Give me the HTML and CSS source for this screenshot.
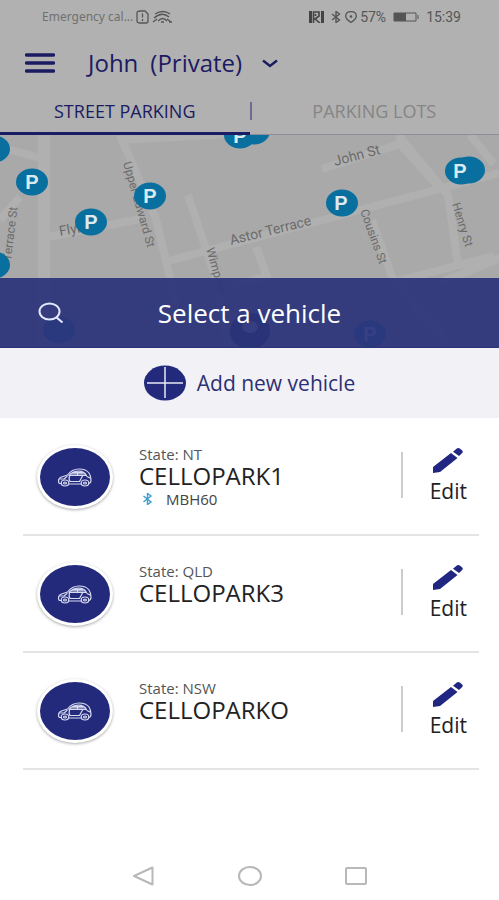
FILE: index.html
```html
<!DOCTYPE html>
<html lang="en">
<head>
<meta charset="utf-8">
<meta name="viewport" content="width=device-width, initial-scale=1">
<title>Select a vehicle</title>
<link rel="stylesheet" href="styles.css">
</head>
<body>
<svg class="defs" aria-hidden="true">
  <symbol id="car" viewBox="0 0 36 20">
    <g fill="none" stroke="currentColor" stroke-width="1.2" stroke-linejoin="round" stroke-linecap="round">
      <path d="M4.500 16.500H3q-1.500 0-1.500-2.500 0-3 3-4l6-2Q15 2 22 2q7 0 10 4 2 3 2 7 0 3-2 3.500M12 17h12"/>
      <path d="M12 8.500Q16 4.200 22 4.200q5 0 7.500 4.300zM20.500 4.500v4M12.500 9q-1 4 .5 5.500h9.500l3-5.500"/>
      <path d="M14 7h14M16 5.700h10"/>
      <ellipse cx="8" cy="16" rx="3.800" ry="3"/><ellipse cx="28" cy="16" rx="3.800" ry="3"/>
      <ellipse cx="8" cy="16" rx="1.500" ry="1"/><ellipse cx="28" cy="16" rx="1.500" ry="1"/>
      <path d="M3 12h4l3-2.500M30 9.500l3 1.500"/>
    </g>
  </symbol>
  <symbol id="pencil" viewBox="0 0 30 26">
    <path fill="currentColor" d="M0 20 18 6l6.500 5L7 25 0 26zM20 4.700l3.800-3.200q1.500-1 3 0l2.400 2q1.200 1.300 0 2.500l-3.200 3z"/>
  </symbol>
  <symbol id="bluetooth" viewBox="0 0 10 12">
    <path fill="none" stroke="currentColor" stroke-width="1.400" d="M1 3l7.500 6L5 11.500V.5L8.500 3 1 9"/>
  </symbol>
</svg>
<main class="screen">
  <div class="status">
    <span class="carrier">Emergency cal...</span>
    <svg class="status-icons" viewBox="0 0 38 14" aria-hidden="true">
      <g fill="none" stroke="currentColor" stroke-width="1.300">
        <path d="M4 1h5l3 3v7q0 2-2 2H4q-3 0-3-2V3q0-2 3-2zM6.500 3.500v4M6.500 9v2"/>
        <path d="M19 4q8-5 15 0M18 8q8-7 15-1M17 12l4-3M22 11q5-5 9 0M25 12h3M31 9l4 3M33 12h3"/>
      </g>
    </svg>
    <span class="spacer"></span>
    <svg class="nfc" viewBox="0 0 15 12" aria-hidden="true"><path fill="currentColor" d="M0 0h3v12H0zM12 0h3v12h-3z"/><path d="M4.500 12V1h5.500v4L6 8l5 4M6.500 3v2" fill="none" stroke="currentColor" stroke-width="1.600"/></svg>
    <svg class="bt" aria-hidden="true"><use href="#bluetooth"/></svg>
    <svg class="loc" viewBox="0 0 12 12" aria-hidden="true"><path d="M6 11.500Q.7 8 .7 5.300.7.700 6 .700t5.300 4.600Q11.300 8 6 11.500z" fill="none" stroke="currentColor" stroke-width="1.300"/><circle cx="6" cy="5.500" r="1.300" fill="currentColor"/></svg>
    <span>57%</span>
    <svg class="battery" viewBox="0 0 26 10" aria-hidden="true"><path d="M1 1h22v8H1zM25 3v4" fill="none" stroke="currentColor"/><path d="M1 1h12v8H1z" fill="currentColor"/></svg>
    <span>15:39</span>
  </div>

  <header class="account">
    <button class="icon-button" type="button" aria-label="Menu">
      <svg class="burger" viewBox="0 0 30 20"><path d="M1.500 2h27M1.500 10h27M1.500 18h27" stroke="currentColor" stroke-width="3.500" stroke-linecap="round"/></svg>
    </button>
    <button class="profile" type="button"><span>John</span><span>(Private)</span>
      <svg class="chevron" viewBox="0 0 16 9"><path d="M1 1.500 8 7l7-5.500" fill="none" stroke="currentColor" stroke-width="2.400"/></svg>
    </button>
  </header>

  <nav class="tabs">
    <a class="tab active" href="#street">STREET PARKING</a>
    <a class="tab" href="#lots">PARKING LOTS</a>
  </nav>

  <section class="map-area" id="street">
    <svg class="map" viewBox="0 0 499 213" preserveAspectRatio="xMidYMid slice">
      <g class="roads">
        <path class="wide" d="M44 0V213"/>
        <path d="M0 12 48 25M0 85l20-23M120 0l36 84 20 85M118 5 250-2M48 102l92-18M168 126 330 83 499 38M188 60l28 84 12 69M322 34 400 9l38 42M398 0l50 60 10 70M470 0l24 29M256 112l11 30-35 8M372 85l22 62 100-26M394 148l55 60M440 148l60-25"/>
      </g>
      <g class="streets">
        <text class="steep" transform="translate(123 28) rotate(74)">Upper Edward St</text>
        <text class="steep" transform="translate(11 126) rotate(-83)">Terrace St</text>
        <text transform="translate(60 101) rotate(-10)">Flynn</text>
        <text transform="translate(231 110) rotate(-14)">Astor Terrace</text>
        <text transform="translate(335 31) rotate(-15)">John St</text>
        <text class="steep" transform="translate(360 76) rotate(70)">Cousins St</text>
        <text class="steep" transform="translate(452 69) rotate(73)">Henry St</text>
        <text class="steep" transform="translate(206 114) rotate(74)">Wimpole</text>
      </g>
      <g class="pins">
        <ellipse cx="-6" cy="14" rx="16" ry="13.500"/><ellipse cx="-6" cy="130" rx="16" ry="13.500"/>
        <ellipse cx="254" cy="-4" rx="16" ry="13.500"/><ellipse cx="240" cy="0" rx="16" ry="13.500"/>
        <ellipse cx="469" cy="35" rx="16" ry="13.500"/><ellipse cx="461" cy="36" rx="16" ry="13.500"/>
        <ellipse cx="32" cy="47" rx="16" ry="13.500"/><ellipse cx="91" cy="87" rx="16" ry="13.500"/>
        <ellipse cx="150" cy="61" rx="16" ry="13.500"/><ellipse cx="342" cy="68" rx="16" ry="13.500"/>
        <ellipse cx="59" cy="195" rx="16" ry="13.500"/><ellipse cx="370" cy="199" rx="16" ry="13.500"/>
        <ellipse class="here" cx="250" cy="196" rx="20" ry="18"/>
      </g>
      <g class="letters">
        <text x="32" y="54">P</text><text x="91" y="94">P</text><text x="150" y="68">P</text>
        <text x="341" y="75">P</text><text x="460" y="43">P</text><text x="240" y="8">P</text><text x="370" y="206">P</text>
      </g>
      <ellipse class="here-dot" cx="250" cy="192" rx="8" ry="6"/>
    </svg>
    <div class="sheet-title">
      <button class="search" type="button" aria-label="Search">
        <svg class="search-icon" viewBox="0 0 26 22"><ellipse cx="11.500" cy="9.500" rx="10" ry="8" fill="none" stroke="currentColor" stroke-width="2"/><path d="m18 15 6.500 5.500" stroke="currentColor" stroke-width="2.200"/></svg>
      </button>
      <h1>Select a vehicle</h1>
      <span></span>
    </div>
  </section>

  <button class="add" type="button">
    <svg class="plus" viewBox="0 0 42 36"><ellipse cx="21" cy="18" rx="21" ry="17.500" fill="#232a7c"/><path d="M3 18h36M21 2v31" stroke="#e9eaf5" stroke-width="1.500"/></svg>
    <span>Add new vehicle</span>
  </button>

  <ul class="vehicles">
    <li class="vehicle">
      <span class="avatar"><svg class="car"><use href="#car"/></svg></span>
      <div class="info"><p class="state">State: NT</p><h2>CELLOPARK1</h2><p class="tag"><svg class="tag-bt"><use href="#bluetooth"/></svg>MBH60</p></div>
      <button class="edit" type="button"><svg class="pencil"><use href="#pencil"/></svg>Edit</button>
    </li>
    <li class="vehicle">
      <span class="avatar"><svg class="car"><use href="#car"/></svg></span>
      <div class="info"><p class="state">State: QLD</p><h2>CELLOPARK3</h2></div>
      <button class="edit" type="button"><svg class="pencil"><use href="#pencil"/></svg>Edit</button>
    </li>
    <li class="vehicle">
      <span class="avatar"><svg class="car"><use href="#car"/></svg></span>
      <div class="info"><p class="state">State: NSW</p><h2>CELLOPARKO</h2></div>
      <button class="edit" type="button"><svg class="pencil"><use href="#pencil"/></svg>Edit</button>
    </li>
  </ul>

  <nav class="system" aria-label="System">
    <button type="button" aria-label="Back"><svg viewBox="0 0 24 20"><path d="M2 10 20.500 1.500v17z"/></svg></button>
    <button type="button" aria-label="Home"><svg viewBox="0 0 24 20"><ellipse cx="12" cy="10" rx="11" ry="9"/></svg></button>
    <button type="button" aria-label="Recent apps"><svg viewBox="0 0 24 20"><rect x="2" y="2" width="20" height="16" rx="1"/></svg></button>
  </nav>
</main>
</body>
</html>
```
FILE: styles.css
```css
* { box-sizing: border-box; }
body { margin: 0; background: #fff; font-family: "Open Sans", "Noto Sans", sans-serif; color: #222; }
h1, h2, p, ul { margin: 0; padding: 0; font-weight: 400; }
button { border: 0; padding: 0; background: none; font: inherit; color: inherit; }
svg { display: block; flex: none; }
.defs { position: absolute; width: 0; height: 0; }
.screen { min-height: 100vh; display: flex; flex-direction: column; }

.status { display: flex; align-items: center; height: 33px; padding: 0 38px 0 42px; background: #b1b1b1; color: #555; font-family: Roboto, sans-serif; font-size: 14px; gap: 3px; }
.carrier { font-family: "Noto Sans", sans-serif; font-size: 12px; color: #707070; }
.spacer { flex: 1; }
.status-icons { width: 38px; height: 14px; }
.nfc { width: 15px; height: 12px; color: #444; }
.bt { width: 12px; height: 12px; margin-left: 3px; }
.loc { width: 12px; height: 12px; }
.battery { width: 26px; height: 10px; margin: 0 4px; }

.account { display: flex; align-items: center; height: 60px; padding-left: 25px; background: #b1b1b1; color: #1b1b62; }
.burger { width: 30px; height: 20px; }
.profile { display: flex; align-items: center; gap: 12px; margin-left: 33px; font-size: 24px; line-height: 30px; }
.chevron { width: 16px; height: 9px; margin-left: 8px; }

.tabs { display: grid; grid-template-columns: 1fr 1fr; height: 42px; background: #b1b1b1; }
.tab { position: relative; display: flex; align-items: center; justify-content: center; font-size: 18px; line-height: 24px; color: #858585; text-decoration: none; border-bottom: 1px solid #8e8e9c; padding-bottom: 6px; }
.tab.active { color: #1b1b62; border-bottom: 3px solid #1c1c66; padding-bottom: 4px; }
.tab.active::after { content: ""; position: absolute; right: -2px; top: 9px; width: 2px; height: 18px; background: #6b6b95; }

.map-area { position: relative; height: 213px; background: #a9a9a9; }
.map { width: 100%; height: 100%; }
.roads { fill: none; stroke: #b0b0b0; stroke-width: 8; stroke-linejoin: round; }
.roads .wide { stroke-width: 12; }
.streets { font-family: Roboto, sans-serif; font-size: 14px; fill: #6b6b6b; }
.streets .steep { font-size: 12px; }
.pins { fill: #096f9f; }
.pins .here { fill: #131545; }
.letters { font-family: "Liberation Sans", sans-serif; font-size: 20px; font-weight: 700; fill: #dce9ef; text-anchor: middle; }
.here-dot { fill: #c5c5d5; }
.sheet-title { position: absolute; inset: auto 0 0; height: 70px; display: grid; grid-template-columns: 1fr auto 1fr; align-items: center; background: rgba(45, 53, 123, .94); border-bottom: 1px solid #2c3478; color: #fff; }
.sheet-title h1 { font-size: 26px; line-height: 32px; }
.search { justify-self: start; margin-left: 38px; }
.search-icon { width: 26px; height: 22px; color: #e4e8ff; }

.add { display: flex; align-items: center; justify-content: center; gap: 11px; height: 70px; background: #f1f1f6; color: #2d3075; font-size: 21px; line-height: 28px; }
.plus { width: 42px; height: 36px; }

.vehicles { list-style: none; padding: 1px 20px 0 23px; }
.vehicle { display: flex; align-items: center; height: 117px; border-bottom: 2px solid #e4e4e4; }
.avatar { display: grid; place-items: center; width: 76px; height: 64px; margin-left: 14px; border: 3px solid #fff; border-radius: 50%; background: #232a7c; box-shadow: 0 1px 3px #aaa; }
.car { width: 36px; height: 20px; color: #d7daf0; }
.info { flex: 1; align-self: flex-start; margin-left: 26px; padding-top: 26px; }
.state { font-size: 15px; line-height: 18px; color: #555; }
.vehicle h2 { font-size: 24px; line-height: 26px; color: #222; }
.tag { display: flex; align-items: center; gap: 13px; padding-left: 3px; font-size: 15px; line-height: 20px; color: #444; }
.tag-bt { width: 11px; height: 12px; color: #3c9fc9; }
.edit { position: relative; display: flex; flex-direction: column; align-items: center; gap: 3px; padding-left: 29px; padding-right: 12px; font-size: 21px; line-height: 30px; color: #222; }
.edit::before { content: ""; position: absolute; left: 0; top: 5px; width: 2px; height: 46px; background: #ccc; }
.pencil { width: 30px; height: 26px; color: #202681; }

.system { display: flex; justify-content: center; gap: 82px; margin-top: auto; padding-bottom: 14px; }
.system svg { width: 24px; height: 20px; fill: none; stroke: #b8b8b8; stroke-width: 2; stroke-linejoin: round; }
```
